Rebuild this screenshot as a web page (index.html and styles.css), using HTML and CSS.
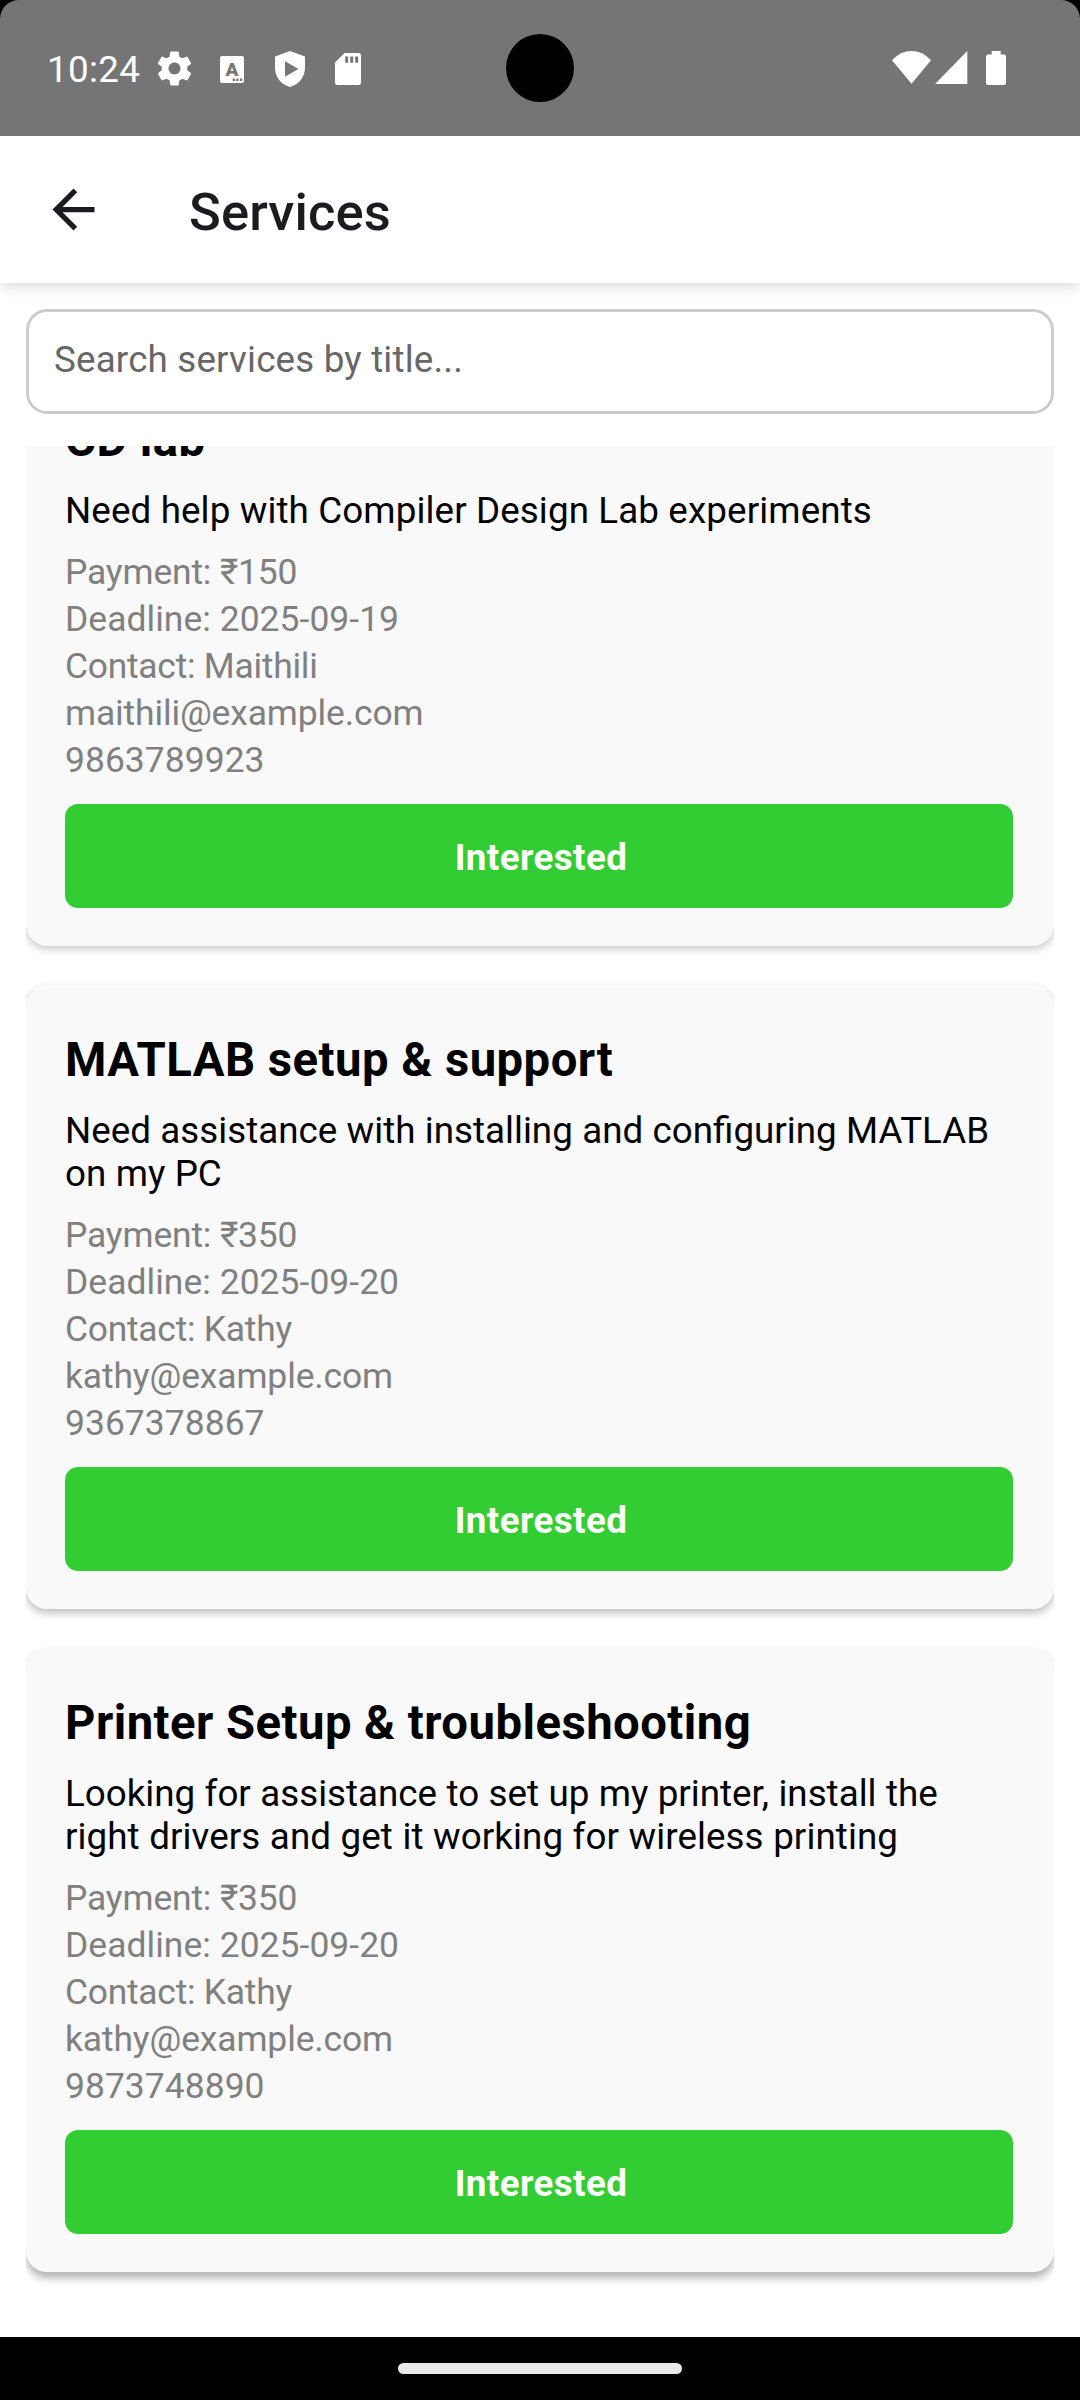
FILE: index.html
```html
<!DOCTYPE html>
<html lang="en">
<head>
<meta charset="utf-8">
<title>Services</title>
<link rel="stylesheet" href="styles.css">
</head>
<body>
<div class="screen">
  <div class="status-frame">
    <div class="status-bar">
      <div class="status-left">
        <span class="clock">10:24</span>
        <svg class="icon-gear" width="41" height="41" viewBox="0 0 24 24"><path fill="#fff" d="M19.43 12.98c.04-.32.07-.64.07-.98s-.03-.66-.07-.98l2.11-1.65c.19-.15.24-.42.12-.64l-2-3.46c-.12-.22-.39-.3-.61-.22l-2.49 1c-.52-.4-1.08-.73-1.69-.98l-.38-2.65C14.46 2.18 14.25 2 14 2h-4c-.25 0-.46.18-.49.42l-.38 2.65c-.61.25-1.17.59-1.69.98l-2.49-1c-.23-.09-.49 0-.61.22l-2 3.46c-.13.22-.07.49.12.64l2.11 1.65c-.04.32-.07.65-.07.98s.03.66.07.98l-2.11 1.65c-.19.15-.24.42-.12.64l2 3.46c.12.22.39.3.61.22l2.49-1c.52.4 1.08.73 1.69.98l.38 2.65c.03.24.24.42.49.42h4c.25 0 .46-.18.49-.42l.38-2.65c.61-.25 1.17-.59 1.69-.98l2.49 1c.23.09.49 0 .61-.22l2-3.46c.12-.22.07-.49-.12-.64l-2.11-1.65zM12 15.5c-1.93 0-3.5-1.57-3.5-3.5s1.57-3.5 3.5-3.5 3.5 1.57 3.5 3.5-1.57 3.5-3.5 3.5z"/></svg>
        <svg class="icon-font" width="24" height="27" viewBox="0 0 24 27"><rect width="24" height="27" rx="2" fill="#fff"/><text x="12" y="20" class="icon-letter">A</text><path fill="#757575" d="M12.700 22.600h2.300v2.300h-2.300zM16.300 22.600h2.300v2.300h-2.300zM19.900 22.600h2.300v2.300h-2.300z"/></svg>
        <svg class="icon-shield" width="30" height="36" viewBox="0 0 30 36"><path fill="#fff" fill-rule="evenodd" d="M15 0 30 5.500V16.500C30 26 24 33.500 15 36 6 33.500 0 26 0 16.500V5.500ZM10 10.300V25.700L23.400 18Z"/></svg>
        <svg class="icon-card" width="26" height="32" viewBox="0 0 26 32"><path fill="#fff" fill-rule="evenodd" d="M9.500 0H23.500Q26 0 26 2.500V29.500Q26 32 23.500 32H2.500Q0 32 0 29.500V9.500ZM10.200 3.400V9.700H13.200V3.400ZM15.200 3.400V9.700H18.200V3.400ZM20.200 3.400V9.700H23.200V3.400Z"/></svg>
      </div>
      <div class="camera"></div>
      <div class="status-right">
        <svg width="39" height="33" viewBox="0 0 39 33"><path fill="#fff" d="M19.500 32.700 0 9.300Q8.500 0 19.500 0T39 9.300Z"/></svg>
        <svg class="icon-signal" width="33" height="33" viewBox="0 0 33 33"><path fill="#fff" d="M0 33 32.300 0V33Z"/></svg>
        <svg class="icon-battery" width="20" height="34" viewBox="0 0 20 34"><path fill="#fff" d="M5.700 0H14.700V3.500H18Q20 3.500 20 5.500V32Q20 34 18 34H2Q0 34 0 32V5.500Q0 3.500 2 3.500H5.700Z"/></svg>
      </div>
    </div>
  </div>

  <header class="app-bar">
    <svg class="back" width="63" height="63" viewBox="0 0 24 24"><path fill="#1c1c1e" d="M20 11H7.830l5.590-5.590L12 4l-8 8 8 8 1.410-1.410L7.830 13H20v-2z"/></svg>
    <h1 class="app-title">Services</h1>
  </header>

  <main class="content">
    <div class="search">Search services by title...</div>
    <div class="list">
      <article class="card card-first">
        <h2 class="card-title">CD lab</h2>
        <p class="desc desc-spaced">Need help with Compiler Design Lab experiments</p>
        <ul class="details">
          <li class="payment">Payment: ₹150</li>
          <li>Deadline: 2025-09-19</li>
          <li class="contact">Contact: Maithili</li>
          <li class="email">maithili@example.com</li>
          <li>9863789923</li>
        </ul>
        <div class="button">Interested</div>
      </article>
      <article class="card card-second">
        <h2 class="card-title">MATLAB setup &amp; support</h2>
        <p class="desc">Need assistance with installing and configuring MATLAB<br>on my PC</p>
        <ul class="details">
          <li class="payment">Payment: ₹350</li>
          <li>Deadline: 2025-09-20</li>
          <li class="contact">Contact: Kathy</li>
          <li class="email">kathy@example.com</li>
          <li>9367378867</li>
        </ul>
        <div class="button">Interested</div>
      </article>
      <article class="card card-third">
        <h2 class="card-title">Printer Setup &amp; troubleshooting</h2>
        <p class="desc">Looking for assistance to set up my printer, install the<br><span class="desc-wide">right drivers and get it working for wireless printing</span></p>
        <ul class="details">
          <li class="payment">Payment: ₹350</li>
          <li>Deadline: 2025-09-20</li>
          <li class="contact">Contact: Kathy</li>
          <li class="email">kathy@example.com</li>
          <li>9873748890</li>
        </ul>
        <div class="button">Interested</div>
      </article>
    </div>
  </main>

  <div class="nav-bar"><div class="nav-pill"></div></div>
</div>
</body>
</html>
```
FILE: styles.css
```css
* { box-sizing: border-box; margin: 0; padding: 0; }

body { background: #fff; font-family: Roboto, sans-serif; }

svg { display: block; flex: none; }

.screen {
  width: 1080px;
  height: 2400px;
  display: flex;
  flex-direction: column;
  overflow: hidden;
}

/* Status bar, stacked above the app bar's shadow */
.status-frame { position: relative; z-index: 1; background: #000; flex: none; }

.status-bar {
  height: 136px;
  padding: 0 74px 0 46px;
  display: grid;
  /* camera column sits on the screen's centre line */
  grid-template-columns: 460px 68px 432px;
  background: #757575;
  border-radius: 19px 19px 0 0;
}

.status-left { display: flex; align-items: flex-start; padding-top: 48px; }

.clock {
  width: 107px;
  padding-left: 1px;
  color: #fff;
  font-size: 36.75px;
  line-height: 43px;
  letter-spacing: 0.35px;
}

.icon-gear { margin-left: 0.5px; }
.icon-font { margin: 8px 0 0 25.5px; }
.icon-letter { font: 900 19px Roboto, sans-serif; fill: #757575; text-anchor: middle; }
.icon-shield { margin: 3px 0 0 31px; }
.icon-card { margin: 5px 0 0 30px; }

.camera { width: 68px; height: 68px; margin-top: 34px; border-radius: 50%; background: #000; }

.status-right { display: flex; align-items: flex-start; justify-content: flex-end; padding-top: 51px; }
.icon-signal { margin-left: 3.5px; }
.icon-battery { margin-left: 18.5px; }

/* App bar */
.app-bar {
  flex: none;
  height: 147px;
  display: flex;
  align-items: flex-start;
  padding-left: 42px;
  background: #fff;
  box-shadow: 0 4px 14px -1px rgba(0, 0, 0, 0.16);
}

.back { margin-top: 42px; }

.app-title {
  margin: 46px 0 0 84px;
  color: #1c1c1e;
  font-size: 52.5px;
  font-weight: 500;
  line-height: 61px;
  letter-spacing: 0.12px;
}

/* Content */
.content {
  flex: 1;
  min-height: 0;
  display: flex;
  flex-direction: column;
  padding: 26px 26px 0;
}

.search {
  flex: none;
  height: 105px;
  padding: 26px 25px 0;
  border: 3px solid #ccc;
  border-radius: 21px;
  background: #fff;
  color: #676767;
  font-size: 36.75px;
  line-height: 43px;
  letter-spacing: 0.18px;
}

.list { flex: 1; min-height: 0; margin-top: 32px; overflow: hidden; }

.card {
  padding: 48px 41px 38px 39px;
  border-radius: 21px;
  background: #f9f9f9;
  margin-bottom: 39px;
}

/* the list is scrolled, so the first card begins above it */
.card-first { margin-top: -81px; box-shadow: 0 3px 8px rgba(0, 0, 0, 0.22), 0 0 2px rgba(0, 0, 0, 0.06); }
.card-second { box-shadow: 0 4px 8px rgba(0, 0, 0, 0.26), 0 0 1px rgba(0, 0, 0, 0.04); }
.card-third { box-shadow: 0 6px 9px rgba(0, 0, 0, 0.3); }

.card-title {
  margin-bottom: 21px;
  color: #000;
  font-size: 47.25px;
  font-weight: 700;
  line-height: 55px;
  letter-spacing: 0.46px;
  white-space: nowrap;
}

.desc {
  margin-bottom: 17px;
  color: #000;
  font-size: 36.75px;
  line-height: 43px;
  word-spacing: 0.29px;
  white-space: nowrap;
}

.desc-spaced { letter-spacing: 0.12px; word-spacing: 0; }
.desc-wide { letter-spacing: 0.08px; }

.details { list-style: none; color: #808080; font-size: 35.44px; line-height: 47px; letter-spacing: 0.05px; }
.payment { letter-spacing: -0.15px; }
.contact { letter-spacing: -0.26px; }
.email { letter-spacing: -0.12px; }

.button {
  height: 104px;
  margin-top: 20px;
  padding: 32px 0 0 4px;
  border-radius: 13px;
  background: #32cd32;
  color: #fff;
  font-size: 36.75px;
  font-weight: 700;
  line-height: 43px;
  letter-spacing: 0.42px;
  text-align: center;
}

/* System navigation */
.nav-bar { flex: none; height: 63px; padding-top: 26px; background: #000; }
.nav-pill { width: 284px; height: 11px; margin: 0 auto; border-radius: 5.5px; background: #e9e9e9; }
```
